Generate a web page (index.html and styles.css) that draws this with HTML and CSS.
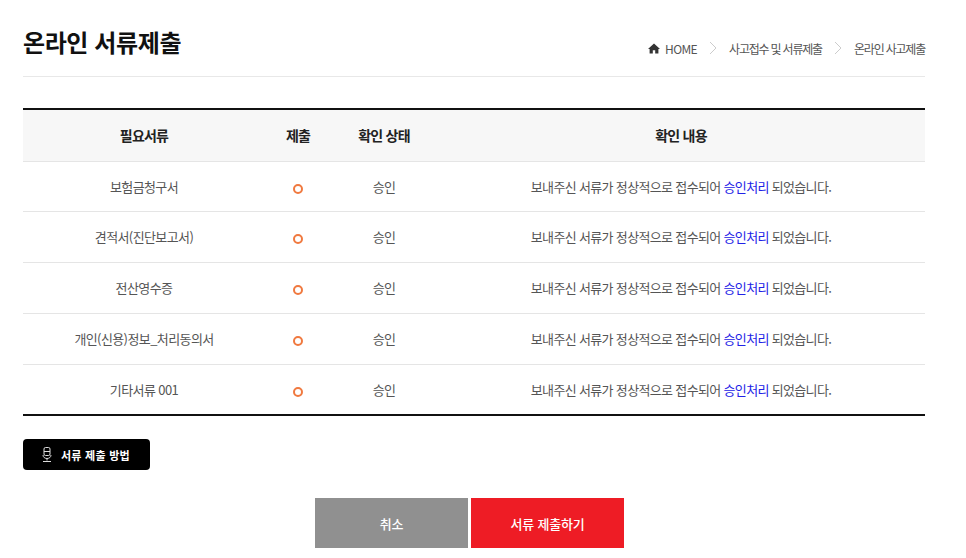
FILE: index.html
```html
<!DOCTYPE html>
<html lang="ko">
<head>
<meta charset="utf-8">
<title>온라인 서류제출</title>
<link rel="stylesheet" href="styles.css">
</head>
<body>
<div class="page">
  <header class="head">
    <h1 class="title">온라인 서류제출</h1>
    <nav class="crumbs">
      <svg class="home" width="12" height="11" viewBox="0 0 12 11"><path d="M6 .5 0 6h1.600v4.500h3.200V7.200h2.400v3.300h3.200V6H12z" fill="#333"/></svg>
      <span class="en">HOME</span>
      <svg class="sep" width="8" height="14" viewBox="0 0 8 14"><path d="M1 1l6 6-6 6" fill="none" stroke="#ccc"/></svg>
      <span>사고접수 및 서류제출</span>
      <svg class="sep" width="8" height="14" viewBox="0 0 8 14"><path d="M1 1l6 6-6 6" fill="none" stroke="#ccc"/></svg>
      <span>온라인 사고제출</span>
    </nav>
  </header>
  <table class="docs">
    <thead>
      <tr><th class="c1">필요서류</th><th class="c2">제출</th><th class="c3">확인 상태</th><th>확인 내용</th></tr>
    </thead>
    <tbody>
      <tr><td>보험금청구서</td><td><i class="ok"></i></td><td>승인</td><td class="msg">보내주신 서류가 정상적으로 접수되어 <b class="hl">승인처리</b> 되었습니다.</td></tr>
      <tr><td>견적서(진단보고서)</td><td><i class="ok"></i></td><td>승인</td><td class="msg">보내주신 서류가 정상적으로 접수되어 <b class="hl">승인처리</b> 되었습니다.</td></tr>
      <tr><td>전산영수증</td><td><i class="ok"></i></td><td>승인</td><td class="msg">보내주신 서류가 정상적으로 접수되어 <b class="hl">승인처리</b> 되었습니다.</td></tr>
      <tr><td>개인(신용)정보_처리동의서</td><td><i class="ok"></i></td><td>승인</td><td class="msg">보내주신 서류가 정상적으로 접수되어 <b class="hl">승인처리</b> 되었습니다.</td></tr>
      <tr><td>기타서류 001</td><td><i class="ok"></i></td><td>승인</td><td class="msg">보내주신 서류가 정상적으로 접수되어 <b class="hl">승인처리</b> 되었습니다.</td></tr>
    </tbody>
  </table>
  <a class="how">
    <svg width="10" height="15" viewBox="0 0 10 15"><g fill="none" stroke="#ddd"><rect x="2" y=".5" width="6" height="8" rx="1.500"/><path d="M2 4.500h6M1 8c0 2.200 1.800 3.500 4 3.500S9 10.200 9 8M5 11.500v2M1 14.500h8"/></g></svg>
    <span>서류 제출 방법</span>
  </a>
  <div class="actions">
    <button class="btn cancel">취소</button>
    <button class="btn submit">서류 제출하기</button>
  </div>
</div>
</body>
</html>
```
FILE: styles.css
```css
* { box-sizing: border-box; }
html, body { margin: 0; background: #fff; }
body { font-family: "Noto Sans CJK KR", "Noto Sans", sans-serif; color: #555; letter-spacing: -0.5px; }
.page { width: 902px; margin-left: 23px; }
.head { height: 77px; border-bottom: 1px solid #e8e8e8; display: flex; justify-content: space-between; align-items: flex-start; }
.title { margin: 23px 0 0; font-size: 24px; line-height: 38px; font-weight: 700; color: #111; letter-spacing: -0.4px; }
.crumbs { display: flex; align-items: center; gap: 12px; margin-top: 39px; height: 18px; font-size: 12px; color: #555; letter-spacing: -1.2px; }
.crumbs .home { margin-right: -7px; }
.crumbs .en { letter-spacing: -0.6px; }
.docs { width: 100%; margin-top: 31px; border-collapse: collapse; border-top: 2px solid #111; border-bottom: 2px solid #111; table-layout: fixed; font-size: 13px; letter-spacing: -0.6px; }
.docs th { height: 52px; background: #f7f7f7; font-size: 14px; font-weight: 700; color: #222; letter-spacing: -0.8px; border-bottom: 1px solid #e5e5e5; padding: 0; }
.docs td { height: 51px; text-align: center; padding: 0; border-bottom: 1px solid #e5e5e5; }
.docs tbody tr:first-child td { height: 50px; }
.docs tbody tr:last-child td { border-bottom: 0; }
.c1 { width: 242px; }
.c2 { width: 66px; }
.c3 { width: 106px; }
.msg { letter-spacing: -0.66px; }
.ok { display: inline-block; width: 10px; height: 10px; border: 2px solid #f0793f; border-radius: 50%; vertical-align: -2px; }
.hl { color: #2222e6; font-weight: 400; }
.how { display: inline-flex; align-items: center; gap: 9px; margin-top: 23px; height: 31px; width: 127px; padding-left: 19px; background: #000; border-radius: 4px; color: #fff; font-size: 11px; font-weight: 700; letter-spacing: 0.25px; }
.actions { display: flex; justify-content: center; gap: 3px; margin-top: 28px; padding-right: 9px; }
.btn { width: 153px; height: 50px; border: 0; color: #fff; font: 500 13px "Noto Sans CJK KR", sans-serif; letter-spacing: -0.2px; }
.cancel { background: #909090; }
.submit { background: #ee1c25; }
```
